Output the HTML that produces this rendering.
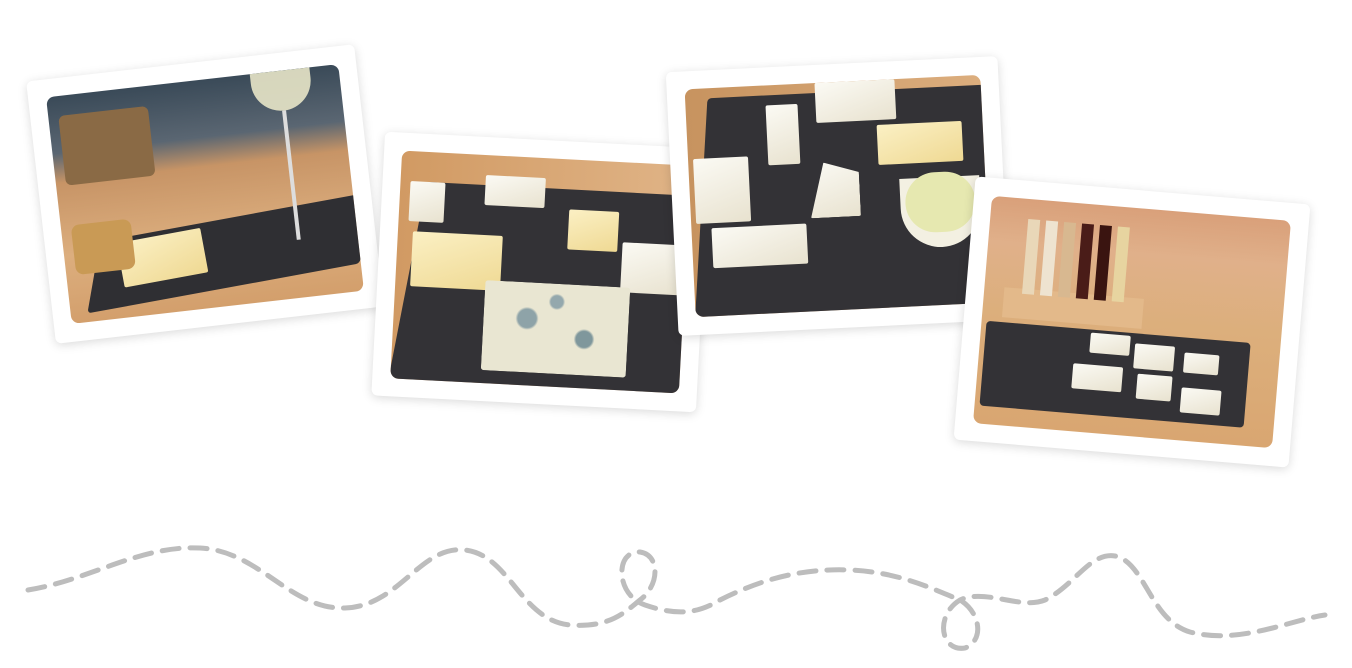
<!DOCTYPE html>
<html><head><meta charset="utf-8"><style>
html,body{margin:0;padding:0;width:1352px;height:668px;background:#fff;overflow:hidden;position:relative;font-family:"Liberation Sans",sans-serif}
.card{position:absolute;background:#fff;box-shadow:0 2px 10px rgba(0,0,0,.15);border-radius:6px;padding:18px;box-sizing:border-box}
.ph{position:relative;width:100%;height:100%;overflow:hidden;border-radius:8px;background:linear-gradient(180deg,#c89a6c,#deb07f 60%,#d19c66)}
.ph div{position:absolute}
.slate{background:#333236;border-radius:4px}
.ch{background:linear-gradient(160deg,#fbf0c4,#efd993);border-radius:2px}
.wh{background:linear-gradient(160deg,#fbfaf4,#e8e2cf);border-radius:2px}
.bl{background:radial-gradient(circle at 30% 40%,#8ea3a8 0 8%,transparent 10%),radial-gradient(circle at 70% 60%,#7f979c 0 7%,transparent 9%),radial-gradient(circle at 50% 20%,#94a8ad 0 6%,transparent 8%),#e9e6d2}
</style></head><body>

<div class="card" style="left:40px;top:62px;width:330px;height:264px;transform:rotate(-6.5deg)">
 <div class="ph" style="background:linear-gradient(180deg,#3a4a58 0,#5a6672 25%,#c79466 38%,#dcae7e 70%,#d39f6c)">
  <div style="left:10px;top:20px;width:90px;height:70px;background:#8a6a45;border-radius:6px"></div>
  <div style="left:30px;top:140px;width:270px;height:70px;background:#2f2f33;transform:skewX(-20deg) rotate(-4deg);border-radius:4px"></div>
  <div class="ch" style="left:55px;top:150px;width:85px;height:45px;transform:rotate(-4deg)"></div>
  <div style="left:10px;top:130px;width:60px;height:50px;background:#c99a55;border-radius:8px"></div>
  <div style="left:205px;top:0;width:60px;height:40px;background:#e8e6c8;border-radius:0 0 30px 30px;opacity:.9"></div>
  <div style="left:233px;top:40px;width:4px;height:130px;background:#ddd;"></div>
 </div>
</div>

<div class="card" style="left:378px;top:140px;width:325px;height:264px;transform:rotate(3deg)">
 <div class="ph" style="background:linear-gradient(90deg,#d19a63,#e0b487)">
  <div class="slate" style="left:10px;top:30px;width:300px;height:230px;transform:skewX(-8deg);"></div>
  <div class="wh" style="left:85px;top:20px;width:60px;height:30px"></div>
  <div class="ch" style="left:170px;top:50px;width:50px;height:40px"></div>
  <div class="ch" style="left:15px;top:80px;width:90px;height:55px"></div>
  <div class="wh" style="left:225px;top:80px;width:60px;height:50px"></div>
  <div class="bl" style="left:90px;top:125px;width:145px;height:90px;border-radius:3px"></div>
  <div class="wh" style="left:10px;top:30px;width:35px;height:40px"></div>
 </div>
</div>

<div class="card" style="left:672px;top:64px;width:332px;height:264px;transform:rotate(-2.8deg)">
 <div class="ph" style="background:linear-gradient(90deg,#c7935f,#dcae7e)">
  <div class="slate" style="left:10px;top:10px;width:300px;height:235px;transform:skewX(-6deg)"></div>
  <div class="wh" style="left:130px;top:0;width:80px;height:40px"></div>
  <div class="wh" style="left:80px;top:20px;width:32px;height:60px"></div>
  <div class="ch" style="left:190px;top:45px;width:85px;height:40px"></div>
  <div class="wh" style="left:5px;top:70px;width:55px;height:65px"></div>
  <div class="wh" style="left:120px;top:80px;width:50px;height:55px;clip-path:polygon(30% 0,100% 20%,100% 100%,0 100%)"></div>
  <div class="wh" style="left:20px;top:140px;width:95px;height:40px"></div>
  <div style="left:210px;top:100px;width:80px;height:70px;background:#f3f0e2;border-radius:0 0 40px 40px"></div>
  <div style="left:215px;top:95px;width:70px;height:60px;background:#e6e8b0;border-radius:30px"></div>
 </div>
</div>

<div class="card" style="left:964px;top:190px;width:336px;height:264px;transform:rotate(4.8deg)">
 <div class="ph" style="background:linear-gradient(180deg,#d9a07a 0,#e0b08a 20%,#dcaf7c 50%,#d9a671)">
  <div style="left:20px;top:90px;width:140px;height:30px;background:#e3b98a"></div>
  <div style="left:38px;top:20px;width:12px;height:75px;background:#e9d7b8"></div>
  <div style="left:56px;top:20px;width:12px;height:75px;background:#eee3d0"></div>
  <div style="left:74px;top:20px;width:12px;height:75px;background:#d8b890"></div>
  <div style="left:92px;top:20px;width:12px;height:75px;background:#4a1c18"></div>
  <div style="left:110px;top:20px;width:12px;height:75px;background:#3a1410"></div>
  <div style="left:128px;top:20px;width:12px;height:75px;background:#e7d4a0"></div>
  <div class="slate" style="left:5px;top:125px;width:265px;height:85px;"></div>
  <div class="wh" style="left:110px;top:128px;width:40px;height:20px"></div>
  <div class="wh" style="left:155px;top:135px;width:40px;height:25px"></div>
  <div class="wh" style="left:205px;top:140px;width:35px;height:20px"></div>
  <div class="wh" style="left:95px;top:160px;width:50px;height:25px"></div>
  <div class="wh" style="left:160px;top:165px;width:35px;height:25px"></div>
  <div class="wh" style="left:205px;top:175px;width:40px;height:25px"></div>
 </div>
</div>

<svg width="1352" height="668" style="position:absolute;left:0;top:0" fill="none">
<path d="M28 590 C90 580 140 545 200 548 C260 551 290 610 345 608 C400 606 420 545 465 550 C510 555 520 620 570 625 C610 628 625 612 640 600 C660 585 660 555 640 552 C615 550 615 595 645 605 C680 617 700 612 720 600 C760 580 800 568 850 570 C900 572 935 590 960 600 C980 612 985 640 965 648 C940 652 935 615 960 600 C985 588 1020 610 1045 600 C1075 585 1090 552 1115 556 C1145 562 1150 620 1190 632 C1240 645 1290 620 1325 615" stroke="#bdbdbd" stroke-width="5" stroke-dasharray="17 11" stroke-linecap="round"/>
</svg>
</body></html>
